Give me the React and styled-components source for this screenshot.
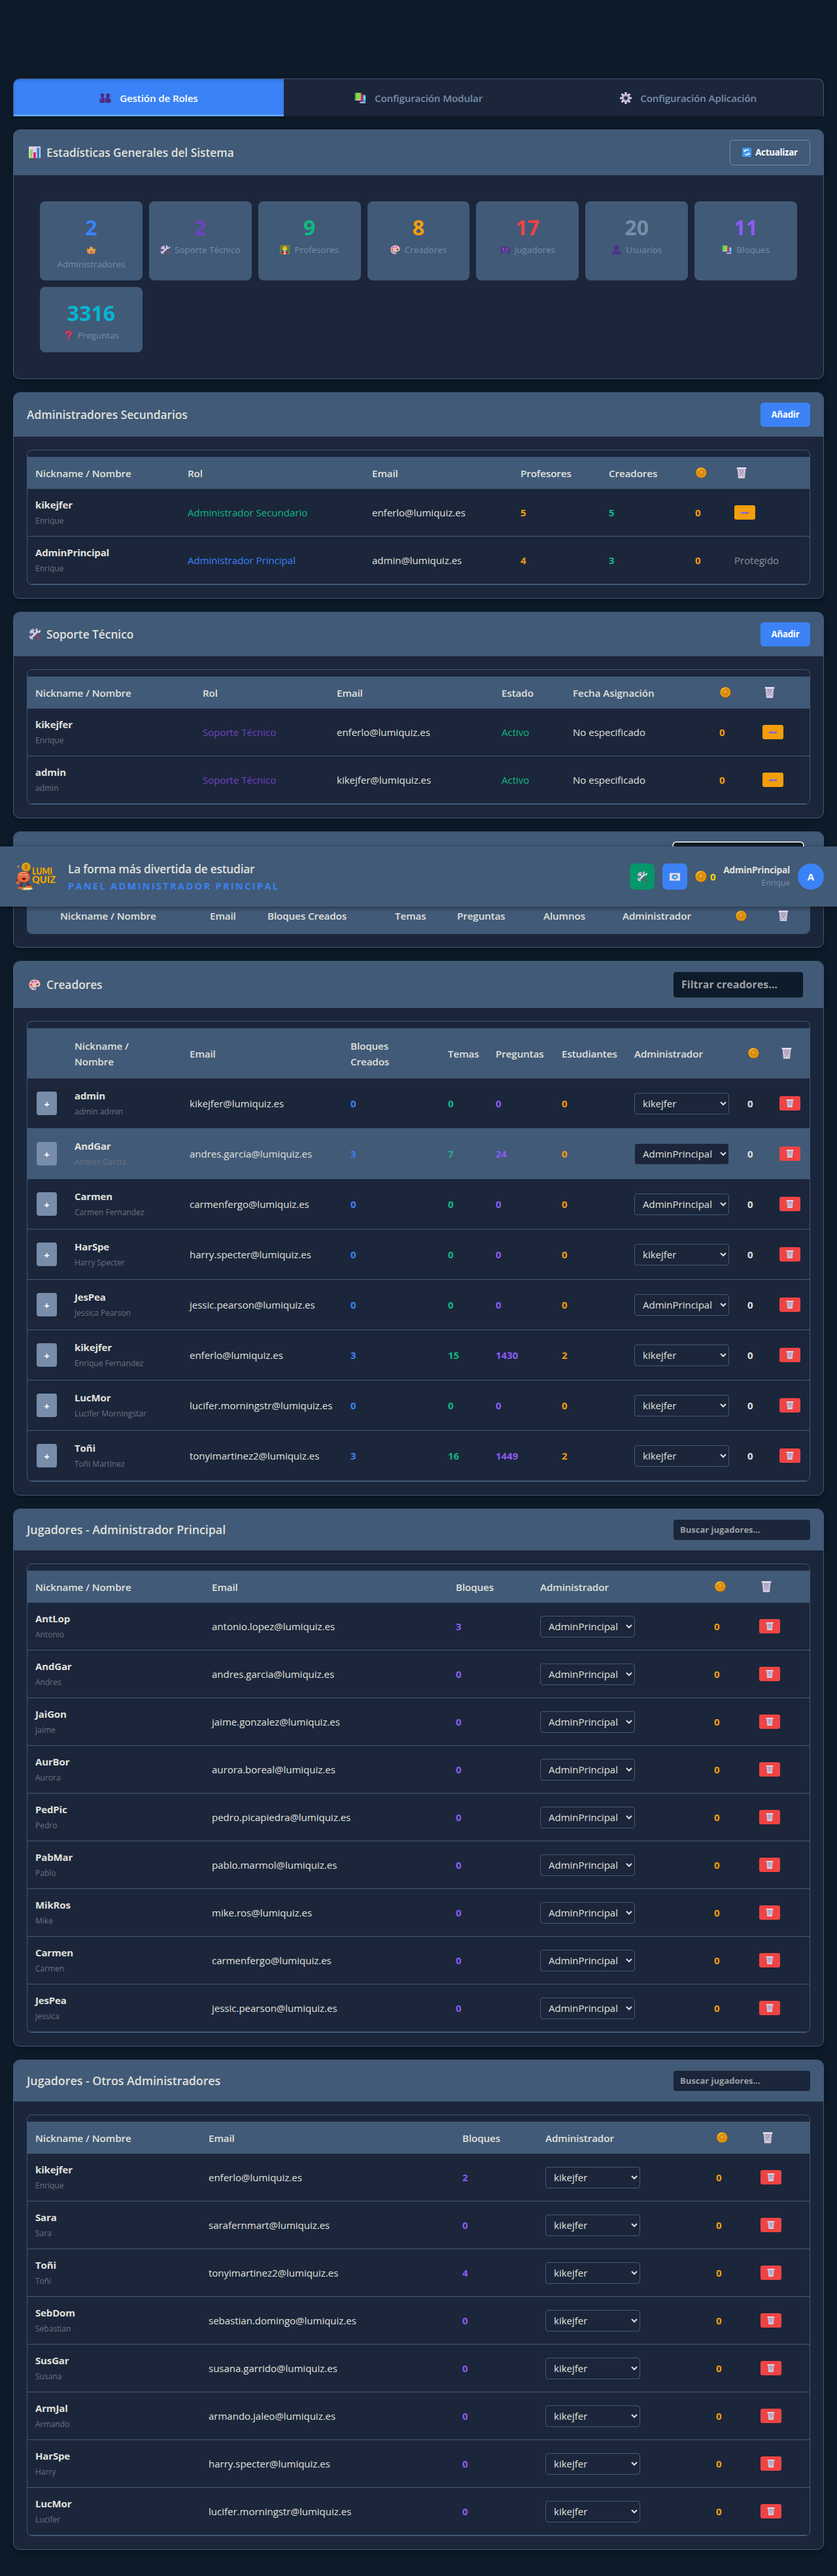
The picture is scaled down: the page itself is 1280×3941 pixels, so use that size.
import React from "react";
import styled, { createGlobalStyle, css } from "styled-components";

const c = {
  bg: "#0d1b2a",
  panel: "#1b263b",
  line: "#415a77",
  muted: "#778da9",
  text: "#e0e1dd",
  sub: "#6b7280",
  blue: "#3b82f6",
  green: "#10b981",
  orange: "#f59e0b",
  red: "#ef4444",
  violet: "#8b5cf6",
  purple: "#6f42c1",
  cyan: "#06b6d4",
};

const GlobalStyle = createGlobalStyle`
  *, *::before, *::after { box-sizing: border-box; }
  body {
    margin: 0;
    background: ${c.bg};
    color: ${c.text};
    font-family: "Open Sans", "Noto Sans", sans-serif;
    font-size: 15px;
    line-height: 25px;
  }
  button, input, select { font-family: inherit; }
`;

/* ---------- icons ---------- */

const Svg = styled.svg`
  display: block;
  flex: none;
  width: ${(p) => p.$w}px;
  height: ${(p) => p.$h || p.$w}px;
`;

const shapes = {
  users: (
    <g fill="#4b2c7f">
      <path d="M5 2c2 0 3.200 1.300 3.200 3.400 0 1.600-.7 2.800-1.500 3.500L9 10.600V18H.5v-5c0-1.500 1-2.200 2.900-2.700l.3-1.400C2.700 8.200 1.900 7 1.900 5.400 1.900 3.300 3 2 5 2z" />
      <path d="M15 2c2 0 3.100 1.300 3.100 3.400 0 1.600-.8 2.800-1.800 3.500l.3 1.400c1.900.5 2.900 1.200 2.900 2.700v5H10v-7.400l2.800-1.700c-.8-.7-1.500-1.900-1.500-3.500C11.300 3.300 13 2 15 2z" />
      <path d="M3 11l3.500 3M13 14l3.500-3" stroke="#6d3fa8" strokeWidth="1" fill="none" />
    </g>
  ),
  user: (
    <g>
      <path fill="#50308a" d="M10 0c3 0 5 2 5 5 0 2-.8 3.700-2 4.700l.3 2.300c3.500.8 5.700 2.500 5.700 5.500V20H1v-2.500c0-3 2.200-4.700 5.700-5.500L7 9.700C5.800 8.700 5 7 5 5c0-3 2-5 5-5z" />
      <path fill="#6a3fa0" d="M7 12h6l-3 3z" />
    </g>
  ),
  books: (
    <g>
      <path fill="#2f9fe0" d="M11 6h8v11h-8z" />
      <path fill="#63d5f2" d="M15 5h4v9h-4z" />
      <path fill="#c9b9e0" d="M9 17h10v2H9z" />
      <path fill="#d81f5f" d="M6 3h9v12H6z" />
      <path fill="#8f2d66" d="M6 13h9v2H6z" />
      <path fill="#86d84c" d="M1 1h10v12H1z" />
      <path fill="#4fae5a" d="M1 1h2v12H1z" />
      <path fill="#e0d8ee" d="M1 12.500h10V14H1z" />
    </g>
  ),
  gear: (
    <g>
      <g stroke="#d8cfe6" strokeWidth="3.600">
        <path d="M10 0v20M0 10h20M3 3l14 14M17 3L3 17" />
      </g>
      <circle cx="10" cy="10" r="7" fill="#c9bddb" />
      <circle cx="10" cy="10" r="4.600" fill="#9c8fb2" />
      <circle cx="10" cy="10" r="3" fill="#2b2d45" />
    </g>
  ),
  chart: (
    <g>
      <rect width="20" height="20" rx="1.500" fill="#ded5e8" />
      <path d="M0 6h20M0 11h20M7 0v20M13 0v20" stroke="#c0b4d2" strokeWidth=".7" />
      <path fill="#86d95b" d="M2 5h4v15H2z" />
      <path fill="#e01f5a" d="M8 10h4v10H8z" />
      <path fill="#2a87dc" d="M14 2h4v18h-4z" />
    </g>
  ),
  refresh: (
    <g>
      <rect width="20" height="20" rx="2" fill="#3f95f0" />
      <path d="M5 9a5 5 0 0 1 9-2.500M15 11a5 5 0 0 1-9 2.500" fill="none" stroke="#eef6ff" strokeWidth="2.300" />
      <path fill="#eef6ff" d="M3.500 3.500L9 8.500H3.500zM16.500 16.500L11 11.500h5.500z" />
    </g>
  ),
  crown: (
    <g>
      <path fill="#f5a63a" d="M1 6l4 3 2.500-5L10 1l2.500 3L15 9l4-3-2 13H3z" />
      <path fill="#d97a2c" d="M3 16h14l-.4 3H3.400z" />
      <circle cx="10" cy="13" r="2" fill="#4f63e0" />
      <circle cx="5.500" cy="14" r="1.200" fill="#e85a86" />
      <circle cx="14.500" cy="14" r="1.200" fill="#e85a86" />
    </g>
  ),
  tools: (
    <g fill="none" strokeLinecap="round">
      <path d="M9 9l8.500 9" stroke="#94435f" strokeWidth="3.400" />
      <path d="M2 8.500L9 2" stroke="#b9a9cf" strokeWidth="4.800" strokeLinecap="butt" />
      <path d="M4 4l6 6" stroke="#d9cfe6" strokeWidth="2.600" />
      <path d="M3.500 17L14.500 6" stroke="#ddd5e8" strokeWidth="3.200" />
      <path d="M13.500 1.800c-1.300 2.500.2 5 2.500 5 1.500 0 2.600-1 2.800-2.300" stroke="#ddd5e8" strokeWidth="2.600" />
      <path d="M1.500 14.500c1.700-1.500 4.700.2 4.700 4" stroke="#c4b6d6" strokeWidth="2.300" />
    </g>
  ),
  teacher: (
    <g>
      <rect x=".5" y="1" width="19" height="18" fill="#2f8c4d" stroke="#a8763a" strokeWidth="1.500" />
      <path fill="#b01f62" d="M4 20v-4c0-2 2-3 6-3s6 1 6 3v4z" />
      <path fill="#fff" d="M8 13h4l-2 4z" />
      <circle cx="10" cy="7.500" r="4.600" fill="#f7bd25" />
      <path fill="#d98a18" d="M5 6c0-3 2-5 5-5s5 2 5 5c-3 0-4-1-5-2-1 1-3 2-5 2z" />
      <path fill="#ffd23c" d="M7 17h6v3H7z" />
    </g>
  ),
  palette: (
    <g>
      <path fill="#f6bba9" d="M10 .5c5.500 0 9.500 3.500 9.500 8.500 0 4-2.500 5-4.500 4.500-2-.4-3 .5-2.500 2.500.6 2-.2 3.700-2.500 3.700C4.500 19.700.5 16 .5 10S4.500.5 10 .5z" />
      <circle cx="14.500" cy="9.500" r="2" fill="#425a77" />
      <circle cx="11.500" cy="4" r="1.900" fill="#d84fe0" />
      <circle cx="6" cy="5" r="1.900" fill="#8a5be8" />
      <circle cx="3.800" cy="10" r="1.800" fill="#e23358" />
      <circle cx="5.500" cy="14.500" r="1.800" fill="#35b5b0" />
      <circle cx="10" cy="16.500" r="1.700" fill="#3f84ea" />
    </g>
  ),
  gamepad: (
    <g>
      <path fill="#54318f" d="M4 4h12c2 0 3 2.500 3.500 8 .5 5-.5 6.500-2 6.500s-2.500-3.500-4-3.500h-7c-1.500 0-2.500 3.500-4 3.500S0 17 .5 12C1 6.500 2 4 4 4z" />
      <path d="M4 8.500h4M6 6.500v4" stroke="#8b76d8" strokeWidth="1.400" />
      <circle cx="14" cy="6.800" r="1" fill="#e8a03c" />
      <circle cx="16" cy="9" r="1" fill="#e0446c" />
      <circle cx="12" cy="9" r="1" fill="#4f9ae8" />
      <circle cx="7.500" cy="12.500" r="1.300" fill="#7a5fc8" />
      <circle cx="12.500" cy="12.500" r="1.300" fill="#7a5fc8" />
    </g>
  ),
  question: (
    <g>
      <path d="M5 6.800C5 3.600 7.200 2 10 2s5 1.600 5 4.500c0 3.400-4.800 3.500-4.800 7.700" fill="none" stroke="#e8305c" strokeWidth="4" />
      <circle cx="10.200" cy="18" r="2.100" fill="#e8305c" />
    </g>
  ),
  coin: (
    <g>
      <circle cx="10" cy="10" r="9.700" fill="#b8690a" />
      <circle cx="9.700" cy="9.500" r="9.100" fill="#f2a413" />
      <circle cx="9.900" cy="9.700" r="6.700" fill="#e39208" stroke="#c97c08" strokeWidth=".9" />
      <path d="M7.500 13.500l-1-5 1.700-3h3.500l1.600 3-1.200 5z" fill="#f7b930" stroke="#a8640a" strokeWidth=".8" />
      <path d="M8.200 8.500h1.200M10.700 8.500h1.200M8.500 11.300h3" stroke="#8f5306" strokeWidth=".9" />
      <path d="M3 6.500C4.500 3.500 7 2.200 9.500 2" stroke="#ffd95c" strokeWidth="1.200" fill="none" />
    </g>
  ),
  trash: (
    <g>
      <path fill="#cfc4dc" d="M2 2h16l-1.700 18H3.700z" />
      <path d="M6 4.500l7.500 12.500M10.500 4.500l4.500 7.500M14 4.500L6.500 17M9.500 4.500L5 12" stroke="#7f7596" strokeWidth=".9" />
      <path fill="#8d81a3" d="M2 3.200h16v1H2z" />
      <path fill="#e2daec" d="M1 0h18v3.200H1z" />
      <path fill="#ddd4e7" d="M3.600 18h12.800v2H3.600z" />
    </g>
  ),
  mail: (
    <g>
      <rect y="1" width="20" height="18" fill="#e9e0f2" />
      <path d="M0 1l4 5M20 1l-4 5M0 19l4-5M20 19l-4-5" stroke="#cfc0e0" strokeWidth="1" />
      <circle cx="10" cy="10" r="5.300" fill="#3f9be0" stroke="#2d6fc0" strokeWidth="1" />
      <circle cx="10" cy="10" r="2" fill="none" stroke="#e9f2ff" strokeWidth="1.200" />
      <path d="M12 8v3.500l2 .5" stroke="#e9f2ff" strokeWidth="1" fill="none" />
    </g>
  ),
};

const Icon = ({ name, w, h }) => (
  <Svg $w={w} $h={h} viewBox="0 0 20 20" preserveAspectRatio="none" aria-hidden="true">
    {shapes[name]}
  </Svg>
);

const Logo = () => (
  <Svg $w={62} $h={44} viewBox="0 0 62 44" role="img">
    <ellipse cx="17" cy="40.500" rx="9" ry="2" fill="#f3d9a0" />
    <path d="M11 29l-3 7 1 3M17 29l2 6 4 1" fill="none" stroke="#6b2b17" strokeWidth="2.200" />
    <path d="M5 39.500h6M17 37.500h7" stroke="#e2661f" strokeWidth="3" strokeLinecap="round" />
    <path d="M4 24l-2.500 4v3M20 20l2.500-6" fill="none" stroke="#7a2f1a" strokeWidth="2" />
    <circle cx="3" cy="31.500" r="2.300" fill="#f26a38" />
    <rect x="2.500" y="15" width="19" height="15.500" rx="7" fill="#ec6637" />
    <path d="M5 19c2-3 6-4 10-3" stroke="#ff9b69" strokeWidth="1.500" fill="none" />
    <circle cx="9" cy="20.500" r="1.700" fill="#fff" />
    <circle cx="15.500" cy="20.500" r="1.700" fill="#fff" />
    <circle cx="9.200" cy="20.700" r="1" fill="#2a1408" />
    <circle cx="15.300" cy="20.700" r="1" fill="#2a1408" />
    <path d="M9.500 24h6c-.3 2.500-1.600 3.400-3 3.400s-2.700-.9-3-3.400z" fill="#5e1a16" />
    <circle cx="16" cy="7.500" r="7" fill="#c8860e" />
    <circle cx="15.600" cy="7.200" r="6.100" fill="#f1b31c" />
    <circle cx="15.800" cy="7.400" r="4" fill="#dc9a12" stroke="#a9700c" strokeWidth=".8" />
    <path d="M15.800 4.800v5" stroke="#7d5208" strokeWidth="1.300" />
    <path d="M4 4.500l.7 1.500 1.500.6-1.500.6L4 8.800l-.7-1.600-1.500-.6L3.300 6z" fill="#f4b51e" />
    <g fontFamily="Lato, 'Open Sans', sans-serif" fontWeight="900" fontSize="14.500" fill="#ffb400" stroke="#8a5a08" strokeWidth=".3">
      <text x="25" y="19" textLength="31" lengthAdjust="spacingAndGlyphs">LUMI</text>
      <text x="25" y="31.500" textLength="36" lengthAdjust="spacingAndGlyphs">QUIZ</text>
    </g>
  </Svg>
);

/* ---------- page ---------- */

const Page = styled.div`
  position: relative;
  padding: 120px 20px 40px;
`;

const Main = styled.main`
  display: flex;
  flex-direction: column;
  gap: 20px;
`;

const Tabs = styled.nav`
  display: grid;
  grid-template-columns: repeat(3, 1fr);
  height: 58px;
  background: ${c.panel};
  border: 1px solid ${c.line};
  border-bottom: 0;
  border-radius: 10px 10px 0 0;
  overflow: hidden;
  box-shadow: 0 2px 8px rgba(0, 0, 0, 0.25);
`;

const Tab = styled.button`
  display: flex;
  align-items: center;
  justify-content: center;
  gap: 13px;
  padding: 3px 0 0;
  border: 0;
  border-bottom: 3px solid transparent;
  background: transparent;
  color: ${c.muted};
  font-size: 15.200px;
  font-weight: 600;
  letter-spacing: -0.15px;
  ${(p) =>
    p.$active &&
    css`
      background: ${c.blue};
      border-bottom-color: #60a5fa;
      color: #fff;
      box-shadow: inset 0 2px 4px rgba(0, 0, 0, 0.15);
    `}
`;

const Panel = styled.section`
  background: ${c.panel};
  border: 1px solid ${c.line};
  border-radius: 10px;
  overflow: hidden;
  box-shadow: 0 4px 12px rgba(0, 0, 0, 0.3);
`;

const PanelHead = styled.header`
  display: flex;
  align-items: center;
  justify-content: space-between;
  height: ${(p) => p.$h}px;
  padding: 0 20px 1px;
  background: ${c.line};
`;

const PanelTitle = styled.h3`
  display: flex;
  align-items: center;
  gap: 9px;
  margin: 0;
  padding-left: ${(p) => (p.$icon ? 3 : 0)}px;
  font-size: ${(p) => p.$size || 17.300}px;
  font-weight: 600;
`;

const PanelBody = styled.div`
  padding: 20px;
`;

const StatGrid = styled.div`
  display: grid;
  grid-template-columns: repeat(7, 1fr);
  gap: 10px;
  padding: 20px;
`;

const StatCard = styled.div`
  min-height: 100px;
  padding: 20px 10px 14px;
  border-radius: 8px;
  background: ${c.line};
  text-align: center;
`;

const StatValue = styled.div`
  color: ${(p) => p.$color};
  font-size: 32px;
  font-weight: 700;
  line-height: 40px;
`;

const StatLabel = styled.div`
  display: flex;
  flex-wrap: wrap;
  align-items: center;
  justify-content: center;
  column-gap: 7px;
  margin-top: 3px;
  color: ${c.muted};
  font-size: 13.400px;
  line-height: 22px;
`;

const CrownBreak = styled.span`
  display: flex;
  justify-content: center;
  align-items: center;
  flex-basis: 100%;
  height: 22px;
`;

const Button = styled.button`
  display: flex;
  align-items: center;
  justify-content: center;
  gap: 6px;
  width: ${(p) => p.$w}px;
  height: ${(p) => (p.$ghost ? 39 : 37)}px;
  padding: 0;
  border: ${(p) => (p.$ghost ? `1px solid ${c.muted}` : "0")};
  border-radius: 5px;
  background: ${(p) => (p.$ghost ? c.line : c.blue)};
  color: #fff;
  font-size: 13.300px;
  font-weight: 700;
  letter-spacing: -0.25px;
`;

const Search = styled.input`
  width: ${(p) => (p.$large ? 198 : 209)}px;
  height: ${(p) => (p.$large ? 39 : 31)}px;
  margin-right: ${(p) => (p.$large ? 11 : 0)}px;
  padding: 0 ${(p) => (p.$large ? 12 : 10)}px;
  border: 0;
  border-radius: 4px;
  background: ${(p) => (p.$large ? c.bg : c.panel)};
  color: ${c.text};
  font-size: ${(p) => (p.$large ? 16 : 13)}px;
  font-weight: 700;
  ${(p) =>
    p.$focused &&
    css`
      height: 43px;
      border: 1px solid #101010;
      box-shadow: 0 0 0 1.500px #fff;
    `}
  &::placeholder {
    color: #9b9fa5;
    opacity: 1;
  }
`;

const TableFrame = styled.div`
  padding-top: 10px;
  border: 1px solid ${c.line};
  border-radius: 8px;
  overflow: hidden;
`;

const Table = styled.table`
  width: 100%;
  table-layout: fixed;
  border-collapse: separate;
  border-spacing: 0;
`;

const Col = styled.col`
  width: ${(p) => p.$w}px;
`;

const Th = styled.th`
  height: ${(p) => p.$h}px;
  padding: 0 12px ${(p) => p.$lift || 0}px;
  background: ${c.line};
  text-align: left;
  font-size: 15.200px;
  font-weight: 600;
  line-height: 24px;
  letter-spacing: -0.1px;
  white-space: pre;
`;

const Row = styled.tr`
  background: ${(p) => (p.$hover ? c.line : "transparent")};
`;

const Td = styled.td`
  height: ${(p) => p.$h}px;
  padding: 0 12px;
  border-bottom: 1px solid ${c.line};
  color: ${(p) => p.$color || c.text};
  font-weight: ${(p) => (p.$bold ? 700 : 400)};
  white-space: nowrap;
`;

const Nick = styled.strong`
  display: block;
  font-weight: 700;
  line-height: 25px;
  letter-spacing: -0.15px;
`;

const RealName = styled.small`
  display: block;
  color: ${c.sub};
  font-size: 12px;
  line-height: 23px;
`;

const IconPad = styled.span`
  display: block;
  padding-left: ${(p) => p.$left}px;
`;

const ActionButton = styled.button`
  display: flex;
  align-items: center;
  justify-content: center;
  width: 32px;
  height: 22px;
  padding: 0;
  border: 0;
  border-radius: 3px;
  background: ${(p) => (p.$remove ? c.orange : c.red)};
`;

const MinusMark = styled.span`
  width: 12px;
  height: 3px;
  background: linear-gradient(#9a86a0, #7d58d8);
`;

const Expand = styled.button`
  display: block;
  width: 31px;
  height: 36px;
  margin-left: 2px;
  padding: 2px 0 0;
  border: 0;
  border-radius: 4px;
  background: ${c.muted};
  color: #fff;
  font-size: 15px;
  font-weight: 700;
`;

const AdminSelect = styled.select`
  display: block;
  width: 145px;
  height: 33px;
  padding: 0 0 0 8px;
  border: 1px solid ${c.line};
  border-radius: 4px;
  background: ${c.panel};
  color: ${c.text};
  font-size: 15px;
`;

/* ---------- floating app bar ---------- */

const AppBar = styled.div`
  position: absolute;
  top: 1295px;
  left: 0;
  right: 0;
  z-index: 10;
  display: flex;
  align-items: center;
  height: 92px;
  padding: 0 20px 0 24px;
  background: ${c.line};
  box-shadow: 0 2px 8px rgba(0, 0, 0, 0.4);
`;

const Slogan = styled.div`
  flex: 1;
  padding: 1px 0 0 18px;
`;

const SloganTitle = styled.div`
  font-size: 17.300px;
  font-weight: 600;
  line-height: 26px;
  letter-spacing: -0.2px;
`;

const SloganRole = styled.div`
  color: ${c.blue};
  font-size: 14.600px;
  font-weight: 700;
  line-height: 24px;
  letter-spacing: 2.300px;
`;

const BarActions = styled.div`
  display: flex;
  align-items: center;
  gap: 12px;
`;

const BarButton = styled.button`
  display: flex;
  align-items: center;
  justify-content: center;
  width: 38px;
  height: 40px;
  padding: 0;
  border: 0;
  border-radius: 7px;
  background: ${(p) => p.$color};
`;

const Wallet = styled.div`
  display: flex;
  align-items: center;
  gap: 5px;
  width: 32px;
  color: #ffd700;
  font-size: 15px;
  font-weight: 700;
`;

const Account = styled.div`
  display: flex;
  flex-direction: column;
  align-items: flex-end;
  width: 101px;
  line-height: 20px;
  white-space: nowrap;
`;

const AccountName = styled.div`
  font-size: 13.800px;
  font-weight: 700;
  letter-spacing: -0.3px;
`;

const AccountUser = styled.div`
  color: ${c.muted};
  font-size: 12px;
`;

const Avatar = styled.div`
  display: flex;
  align-items: center;
  justify-content: center;
  width: 40px;
  height: 40px;
  border-radius: 50%;
  background: ${c.blue};
  color: #fff;
  font-weight: 700;
`;

/* ---------- pieces ---------- */

const COIN = { icon: "coin", w: 17, left: 1 };
const BIN = { icon: "trash", w: 16, left: 3 };

const DataTable = ({ cols, heads, headHeight = 49, headLift = 0, rowHeight = 73, rows = [], hoverRow = -1 }) => (
  <TableFrame>
    <Table>
      <colgroup>
        {cols.map((w, i) => (
          <Col key={i} $w={w} />
        ))}
      </colgroup>
      <thead>
        <tr>
          {heads.map((h, i) => (
            <Th key={i} $h={headHeight} $lift={headLift}>
              {h.icon ? (
                <IconPad $left={h.left}>
                  <Icon name={h.icon} w={h.w} h={16.500} />
                </IconPad>
              ) : (
                h
              )}
            </Th>
          ))}
        </tr>
      </thead>
      <tbody>
        {rows.map((cells, r) => (
          <Row key={r} $hover={r === hoverRow}>
            {cells.map((cell, i) => (
              <Td key={i} $h={rowHeight} $color={cell.color} $bold={cell.bold}>
                {cell.body}
              </Td>
            ))}
          </Row>
        ))}
      </tbody>
    </Table>
  </TableFrame>
);

const who = (nick, name) => ({
  body: (
    <>
      <Nick>{nick}</Nick>
      <RealName>{name}</RealName>
    </>
  ),
});
const plain = (body, color) => ({ body, color });
const num = (body, color) => ({ body, color, bold: true });
const bin = () => ({
  body: (
    <ActionButton>
      <Icon name="trash" w={12} h={12} />
    </ActionButton>
  ),
});
const minus = () => ({
  body: (
    <ActionButton $remove>
      <MinusMark />
    </ActionButton>
  ),
});
const admin = (value) => ({
  body: (
    <AdminSelect defaultValue={value}>
      <option>{value}</option>
    </AdminSelect>
  ),
});
const expand = () => ({ body: <Expand>+</Expand> });

const stats = [
  ["2", c.blue, "crown", "Administradores"],
  ["2", c.purple, "tools", "Soporte Técnico"],
  ["9", c.green, "teacher", "Profesores"],
  ["8", c.orange, "palette", "Creadores"],
  ["17", c.red, "gamepad", "Jugadores"],
  ["20", c.muted, "user", "Usuarios"],
  ["11", c.violet, "books", "Bloques"],
  ["3316", c.cyan, "question", "Preguntas"],
];

const creators = [
  ["admin", "admin admin", "kikejfer", 0, 0, 0, 0, "kikejfer"],
  ["AndGar", "Andres Garcia", "andres.garcia", 3, 7, 24, 0, "AdminPrincipal"],
  ["Carmen", "Carmen Fernandez", "carmenfergo", 0, 0, 0, 0, "AdminPrincipal"],
  ["HarSpe", "Harry Specter", "harry.specter", 0, 0, 0, 0, "kikejfer"],
  ["JesPea", "Jessica Pearson", "jessic.pearson", 0, 0, 0, 0, "AdminPrincipal"],
  ["kikejfer", "Enrique Fernandez", "enferlo", 3, 15, 1430, 2, "kikejfer"],
  ["LucMor", "Lucifer Morningstar", "lucifer.morningstr", 0, 0, 0, 0, "kikejfer"],
  ["Toñi", "Toñi Martinez", "tonyimartinez2", 3, 16, 1449, 2, "kikejfer"],
];

const mainPlayers = [
  ["AntLop", "Antonio", "antonio.lopez", 3],
  ["AndGar", "Andres", "andres.garcia", 0],
  ["JaiGon", "Jaime", "jaime.gonzalez", 0],
  ["AurBor", "Aurora", "aurora.boreal", 0],
  ["PedPic", "Pedro", "pedro.picapiedra", 0],
  ["PabMar", "Pablo", "pablo.marmol", 0],
  ["MikRos", "Mike", "mike.ros", 0],
  ["Carmen", "Carmen", "carmenfergo", 0],
  ["JesPea", "Jessica", "jessic.pearson", 0],
];

const otherPlayers = [
  ["kikejfer", "Enrique", "enferlo", 2],
  ["Sara", "Sara", "sarafernmart", 0],
  ["Toñi", "Toñi", "tonyimartinez2", 4],
  ["SebDom", "Sebastian", "sebastian.domingo", 0],
  ["SusGar", "Susana", "susana.garrido", 0],
  ["ArmJal", "Armando", "armando.jaleo", 0],
  ["HarSpe", "Harry", "harry.specter", 0],
  ["LucMor", "Lucifer", "lucifer.morningstr", 0],
];

const mail = (user) => `${user}@lumiquiz.es`;

const playerRows = (list, owner) =>
  list.map(([nick, name, user, blocks]) => [
    who(nick, name),
    plain(mail(user)),
    num(blocks, c.violet),
    admin(owner),
    num(0, c.orange),
    bin(),
  ]);

const playerHeads = ["Nickname / Nombre", "Email", "Bloques", "Administrador", COIN, BIN];

export default function App() {
  return (
    <>
      <GlobalStyle />
      <Page>
        <AppBar>
          <Logo />
          <Slogan>
            <SloganTitle>La forma más divertida de estudiar</SloganTitle>
            <SloganRole>PANEL ADMINISTRADOR PRINCIPAL</SloganRole>
          </Slogan>
          <BarActions>
            <BarButton $color="#059669">
              <Icon name="tools" w={16} />
            </BarButton>
            <BarButton $color={c.blue}>
              <Icon name="mail" w={16} h={13} />
            </BarButton>
            <Wallet>
              <Icon name="coin" w={18} h={18} />0
            </Wallet>
            <Account>
              <AccountName>AdminPrincipal</AccountName>
              <AccountUser>Enrique</AccountUser>
            </Account>
            <Avatar>A</Avatar>
          </BarActions>
        </AppBar>

        <Main>
          <Tabs>
            <Tab $active>
              <Icon name="users" w={18} h={18} />
              Gestión de Roles
            </Tab>
            <Tab>
              <Icon name="books" w={18} h={18} />
              Configuración Modular
            </Tab>
            <Tab>
              <Icon name="gear" w={18} h={18} />
              Configuración Aplicación
            </Tab>
          </Tabs>

          <Panel>
            <PanelHead $h={69}>
              <PanelTitle $icon>
                <Icon name="chart" w={18} h={18} />
                Estadísticas Generales del Sistema
              </PanelTitle>
              <Button $ghost $w={123}>
                <Icon name="refresh" w={14} />
                Actualizar
              </Button>
            </PanelHead>
            <PanelBody>
              <StatGrid>
                {stats.map(([value, color, icon, label]) => (
                  <StatCard key={label}>
                    <StatValue $color={color}>{value}</StatValue>
                    <StatLabel>
                      {icon === "crown" ? (
                        <CrownBreak>
                          <Icon name="crown" w={15} h={13} />
                        </CrownBreak>
                      ) : (
                        <Icon name={icon} w={15} h={14} />
                      )}
                      {label}
                    </StatLabel>
                  </StatCard>
                ))}
              </StatGrid>
            </PanelBody>
          </Panel>

          <Panel>
            <PanelHead $h={67}>
              <PanelTitle>Administradores Secundarios</PanelTitle>
              <Button $w={76}>Añadir</Button>
            </PanelHead>
            <PanelBody>
              <DataTable
                cols={[233, 282, 227, 135, 132, 60, 127]}
                heads={["Nickname / Nombre", "Rol", "Email", "Profesores", "Creadores", COIN, BIN]}
                rows={[
                  [
                    who("kikejfer", "Enrique"),
                    plain("Administrador Secundario", c.green),
                    plain(mail("enferlo")),
                    num(5, c.orange),
                    num(5, c.green),
                    num(0, c.orange),
                    minus(),
                  ],
                  [
                    who("AdminPrincipal", "Enrique"),
                    plain("Administrador Principal", c.blue),
                    plain(mail("admin")),
                    num(4, c.orange),
                    num(3, c.green),
                    num(0, c.orange),
                    plain("Protegido", "#8b929c"),
                  ],
                ]}
              />
            </PanelBody>
          </Panel>

          <Panel>
            <PanelHead $h={67}>
              <PanelTitle $icon>
                <Icon name="tools" w={18} h={18} />
                Soporte Técnico
              </PanelTitle>
              <Button $w={76}>Añadir</Button>
            </PanelHead>
            <PanelBody>
              <DataTable
                cols={[256, 205, 252, 109, 224, 66, 84]}
                heads={["Nickname / Nombre", "Rol", "Email", "Estado", "Fecha Asignación", COIN, BIN]}
                rows={[
                  ["kikejfer", "Enrique", "enferlo"],
                  ["admin", "admin", "kikejfer"],
                ].map(([nick, name, user]) => [
                  who(nick, name),
                  plain("Soporte Técnico", c.purple),
                  plain(mail(user)),
                  plain("Activo", c.green),
                  plain("No especificado"),
                  num(0, c.orange),
                  minus(),
                ])}
              />
            </PanelBody>
          </Panel>

          <Panel>
            <PanelHead $h={75}>
              <span />
              <Search $large $focused aria-label="Profesores" />
            </PanelHead>
            <PanelBody>
              <DataTable
                headLift={5}
                cols={[38, 229, 88, 195, 95, 132, 121, 172, 63, 63]}
                heads={["", "Nickname / Nombre", "Email", "Bloques Creados", "Temas", "Preguntas", "Alumnos", "Administrador", COIN, BIN]}
              />
            </PanelBody>
          </Panel>

          <Panel>
            <PanelHead $h={71}>
              <PanelTitle $icon>
                <Icon name="palette" w={18} h={17} />
                Creadores
              </PanelTitle>
              <Search $large placeholder="Filtrar creadores..." />
            </PanelHead>
            <PanelBody>
              <DataTable
                cols={[60, 176, 246, 149, 73, 101, 111, 173, 49, 58]}
                headHeight={77}
                rowHeight={77}
                hoverRow={1}
                heads={["", "Nickname /\nNombre", "Email", "Bloques\nCreados", "Temas", "Preguntas", "Estudiantes", "Administrador", COIN, BIN]}
                rows={creators.map(([nick, name, user, blocks, topics, questions, students, owner]) => [
                  expand(),
                  who(nick, name),
                  plain(mail(user)),
                  num(blocks, c.blue),
                  num(topics, c.green),
                  num(questions, c.violet),
                  num(students, c.orange),
                  admin(owner),
                  num(0),
                  bin(),
                ])}
              />
            </PanelBody>
          </Panel>

          <Panel>
            <PanelHead $h={63}>
              <PanelTitle $size={17.800}>Jugadores - Administrador Principal</PanelTitle>
              <Search placeholder="Buscar jugadores..." />
            </PanelHead>
            <PanelBody>
              <DataTable
                cols={[270, 373, 129, 266, 69, 89]}
                heads={playerHeads}
                rows={playerRows(mainPlayers, "AdminPrincipal")}
              />
            </PanelBody>
          </Panel>

          <Panel>
            <PanelHead $h={63}>
              <PanelTitle $size={17.800}>Jugadores - Otros Administradores</PanelTitle>
              <Search placeholder="Buscar jugadores..." />
            </PanelHead>
            <PanelBody>
              <DataTable
                cols={[265, 388, 127, 261, 68, 87]}
                heads={playerHeads}
                rows={playerRows(otherPlayers, "kikejfer")}
              />
            </PanelBody>
          </Panel>
        </Main>
      </Page>
    </>
  );
}
